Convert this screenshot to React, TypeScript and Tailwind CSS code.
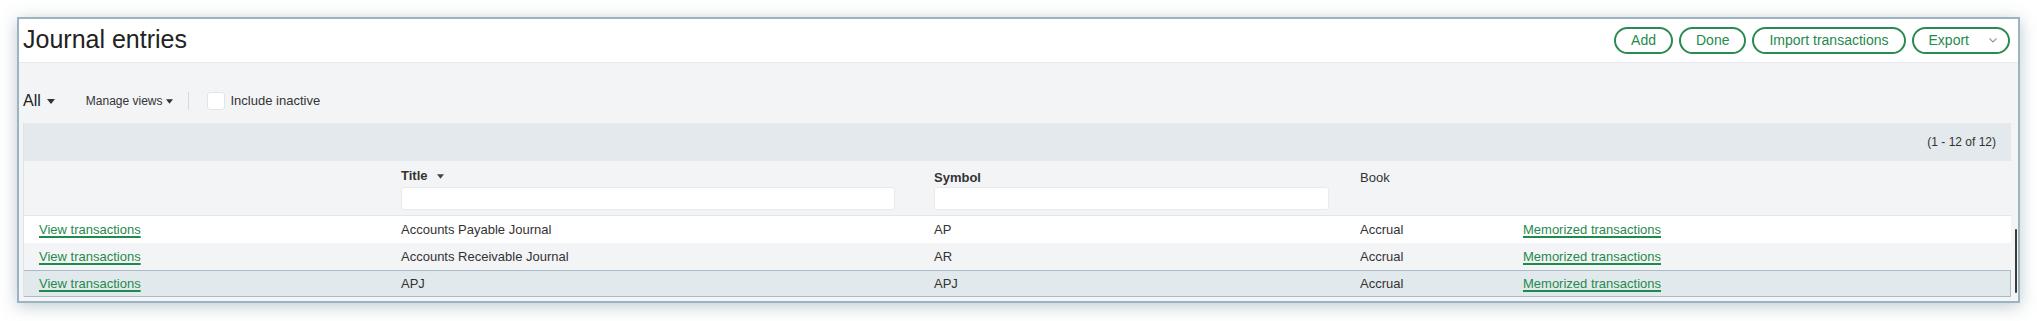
import React from 'react';

// Journal entries list — window frame, action buttons, views toolbar and the journals table.

const FONT = { fontFamily: '"Liberation Sans", Arial, Helvetica, sans-serif' };

interface Journal {
  title: string;
  symbol: string;
  book: string;
  selected?: boolean;
}

const JOURNALS: Journal[] = [
  { title: 'Accounts Payable Journal', symbol: 'AP', book: 'Accrual' },
  { title: 'Accounts Receivable Journal', symbol: 'AR', book: 'Accrual' },
  { title: 'APJ', symbol: 'APJ', book: 'Accrual', selected: true },
];

const COLS = 'grid grid-cols-[377px_533px_426px_163px_1fr]';

function Caret({ className = '' }: { className?: string }) {
  return (
    <svg width="8" height="5" viewBox="0 0 8 5" className={className}>
      <path d="M0 0h8L4 5z" fill="currentColor" />
    </svg>
  );
}

function PillButton({ children }: { children: React.ReactNode }) {
  return (
    <button className="h-[27px] px-[15px] rounded-full border-2 border-[#2a8a50] text-[#1f8a4c] text-[14px] leading-none flex items-center bg-white">
      {children}
    </button>
  );
}

function LinkText({ children }: { children: React.ReactNode }) {
  return (
    <a className="text-[#1f8a4c] underline decoration-[#1f8a4c] decoration-[1.5px] underline-offset-[2px] cursor-pointer">
      {children}
    </a>
  );
}

export default function App() {
  return (
    <div className="w-[2037px] h-[321px] bg-white pt-[17px] pl-[17px]" style={FONT}>
      <div className="relative w-[2003px] h-[286px] border-2 border-[#9cb3c2] bg-[#f3f4f6] shadow-[0_3px_16px_rgba(70,100,120,0.35)] flex flex-col">
        {/* title bar */}
        <div className="h-[44px] bg-white border-b border-[#e6e9ec] flex items-center justify-between pl-[4px] pr-[8px]">
          <h1 className="text-[25px] text-[#222] leading-none -mt-[2px]">Journal entries</h1>
          <div className="flex items-center gap-[6px] -mt-[1px]">
            <PillButton>Add</PillButton>
            <PillButton>Done</PillButton>
            <PillButton>Import transactions</PillButton>
            <button className="h-[27px] pl-[15px] pr-[11px] rounded-full border-2 border-[#2a8a50] text-[#1f8a4c] text-[14px] leading-none flex items-center gap-[20px] bg-white">
              Export
              <svg width="8" height="5" viewBox="0 0 8 5" className="text-[#8a9aa4]">
                <path d="M0.5 0.5L4 4L7.5 0.5" stroke="currentColor" strokeWidth="1.1" fill="none" />
              </svg>
            </button>
          </div>
        </div>

        {/* views toolbar */}
        <div className="h-[60px] flex items-end pb-[13px] pl-[4px]">
          <div className="flex items-center h-[18px]">
            <span className="text-[16px] font-medium text-[#222] leading-none">All</span>
            <Caret className="ml-[6px] text-[#333]" />
            <span className="ml-[31px] text-[12px] text-[#333]">Manage views</span>
            <Caret className="ml-[3px] w-[7px] text-[#333]" />
            <span className="ml-[15px] w-px h-[18px] bg-[#d6dadd]" />
            <span className="ml-[18px] w-[18px] h-[18px] bg-white border border-[#e2e5e8] rounded-[3px]" />
            <span className="ml-[6px] text-[13px] text-[#333]">Include inactive</span>
          </div>
        </div>

        {/* table */}
        <div className="ml-[4px] w-[1988px] border-l border-[#dfe4e7] text-[13px] text-[#333]">
          <div className="h-[38px] bg-[#e3e9ec] flex items-center justify-end pr-[15px] text-[12px] text-[#333]">
            (1 - 12 of 12)
          </div>
          <div className={`${COLS} h-[55px] bg-[#f3f4f6] border-b border-[#e4e7ea] pt-[7px]`}>
            <div />
            <div className="flex flex-col">
              <div className="flex items-center gap-[9px] h-[16px] font-bold">
                Title <Caret className="w-[7px] text-[#444]" />
              </div>
              <div className="mt-[3px] w-[494px] h-[23px] bg-white border border-[#e8ebed] rounded-[3px]" />
            </div>
            <div className="flex flex-col">
              <div className="h-[16px] font-bold">Symbol</div>
              <div className="mt-[3px] w-[395px] h-[23px] bg-white border border-[#e8ebed] rounded-[3px]" />
            </div>
            <div className="h-[16px]">Book</div>
            <div />
          </div>
          {JOURNALS.map((j, i) => (
            <div
              key={j.symbol}
              className={`${COLS} items-center ${
                j.selected
                  ? 'h-[27px] bg-[#e2e9ec] border-y border-[#a8bbc6] border-r'
                  : i % 2 === 0
                  ? 'h-[27px] bg-white'
                  : 'h-[27px] bg-[#f3f4f6]'
              }`}
            >
              <div className="pl-[15px]">
                <LinkText>View transactions</LinkText>
              </div>
              <div>{j.title}</div>
              <div>{j.symbol}</div>
              <div>{j.book}</div>
              <div>
                <LinkText>Memorized transactions</LinkText>
              </div>
            </div>
          ))}
        </div>

        {/* overlay scrollbar thumb */}
        <div className="absolute right-[1px] top-[210px] w-[2px] h-[64px] rounded-full bg-[#3a3a3a]" />
      </div>
    </div>
  );
}
